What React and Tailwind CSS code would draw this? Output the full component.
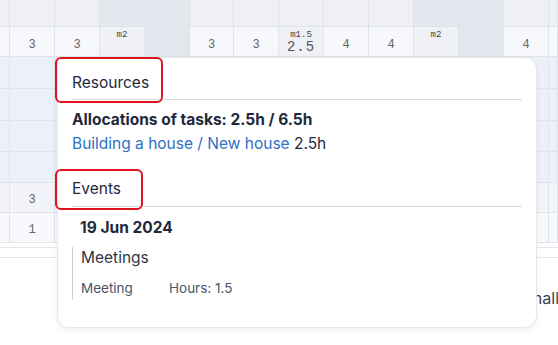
const widths = [10, 45, 45, 45, 45, 44, 45, 45, 45, 45, 45, 45, 45, 9]
const weekend = [3, 4, 10, 11]

const topRow = ['', '3', '3', 'm2', '', '3', '3', 'm1.5|2.5', '4', '4', 'm2', '', '4', '']

const bodyRows = [
  { h: 'h-[32px]', bg: 'bg-[#edf0f8]', first: '' },
  { h: 'h-[32px]', bg: 'bg-[#edf0f8]', first: '' },
  { h: 'h-[31px]', bg: 'bg-[#edf0f8]', first: '' },
  { h: 'h-[31px]', bg: 'bg-[#edf0f8]', first: '' },
  { h: 'h-[30px]', bg: 'bg-[#f2f4fa]', first: '3' },
  { h: 'h-[30px]', bg: 'bg-[#f8f9fc]', first: '1' },
]

function Cell({ w, className = '', children }) {
  return (
    <div
      className={`shrink-0 border-r border-[#dfe3ea] ${className}`}
      style={{ width: w }}
    >
      {children}
    </div>
  )
}

function TopCell({ i, value }) {
  const isWeekend = weekend.includes(i)
  if (value.startsWith('m')) {
    const [marker, hours] = value.split('|')
    return (
      <Cell w={widths[i]} className="flex flex-col items-center pt-[3px] bg-[#eff1f6]">
        <span className="text-[9px] leading-[10px] text-[#444]">{marker}</span>
        {hours && <span className="text-[14px] leading-[15px] tracking-[1px] text-[#555]">{hours}</span>}
      </Cell>
    )
  }
  return (
    <Cell
      w={widths[i]}
      className={`flex items-center justify-center pt-[6px] text-[12px] text-[#666] ${isWeekend ? 'bg-[#e3e6ed]' : 'bg-[#f7f8fb]'}`}
    >
      {value}
    </Cell>
  )
}

export default function App() {
  return (
    <div className="relative w-[558px] h-[345px] overflow-hidden bg-white font-['Inter',sans-serif]">
      {/* planner grid */}
      <div className="font-['Liberation_Mono',monospace]">
        <div className="flex h-[27px] border-b border-[#dfe3ea]">
          {widths.map((w, i) => (
            <Cell key={i} w={w} className={weekend.includes(i) ? 'bg-[#e4e7ee]' : 'bg-[#eef0f6]'} />
          ))}
        </div>
        <div className="flex h-[30px] border-b border-[#dfe3ea]">
          {topRow.map((v, i) => (
            <TopCell key={i} i={i} value={v} />
          ))}
        </div>
        {bodyRows.map((r, ri) => (
          <div key={ri} className={`flex ${r.h} border-b border-[#dfe3ea] ${r.bg}`}>
            {widths.map((w, i) => (
              <Cell key={i} w={w} className="flex items-center justify-center pt-[4px] text-[12px] text-[#666]">
                {i === 1 ? r.first : ''}
              </Cell>
            ))}
          </div>
        ))}
        <div className="h-[5px] border-b border-[#e5e7eb]" />
        <div className="h-[10px] border-b border-[#e5e7eb]" />
      </div>

      <div className="flex justify-end pt-[28px] text-[16px] text-[#334155]">
        <span className="-mr-[1px]">Small</span>
      </div>

      {/* popover */}
      <div className="absolute left-[57px] top-[57px] w-[480px] h-[271px] bg-white border border-[#e5e7eb] rounded-b-[12px] rounded-tr-[12px] shadow-[0_2px_6px_rgba(0,0,0,0.06)] px-[14px] pt-[14px] text-[#1e293b]">
        <div className="text-[15.5px] leading-[22px] pb-[5px] border-b border-[#d9dce1]">Resources</div>
        <div className="mt-[9px] text-[15.5px] leading-[22px] font-bold">Allocations of tasks: 2.5h / 6.5h</div>
        <div className="mt-[2px] text-[15.5px] leading-[22px]">
          <span className="text-[#2f6fc4]">Building a house / New house</span> 2.5h
        </div>

        <div className="mt-[23px] text-[15.5px] leading-[22px] pb-[6px] border-b border-[#d9dce1]">Events</div>
        <div className="mt-[10px] pl-[8px] text-[15.5px] leading-[22px] font-bold">19 Jun 2024</div>
        <div className="mt-[8px] border-l border-[#cbd0d8] pl-[8px] pb-[2px]">
          <div className="text-[15.5px] leading-[22px] text-[#2d3748]">Meetings</div>
          <div className="mt-[9px] flex text-[13.5px] leading-[20px] text-[#4a5568]">
            <span className="w-[88px]">Meeting</span>
            <span>Hours: 1.5</span>
          </div>
        </div>
      </div>

      {/* annotation frames */}
      <div className="absolute left-[55px] top-[57px] w-[108px] h-[46px] border-2 border-[#e0141e] rounded-[6px]" />
      <div className="absolute left-[55px] top-[169px] w-[88px] h-[41px] border-2 border-[#e0141e] rounded-[6px]" />
    </div>
  )
}
